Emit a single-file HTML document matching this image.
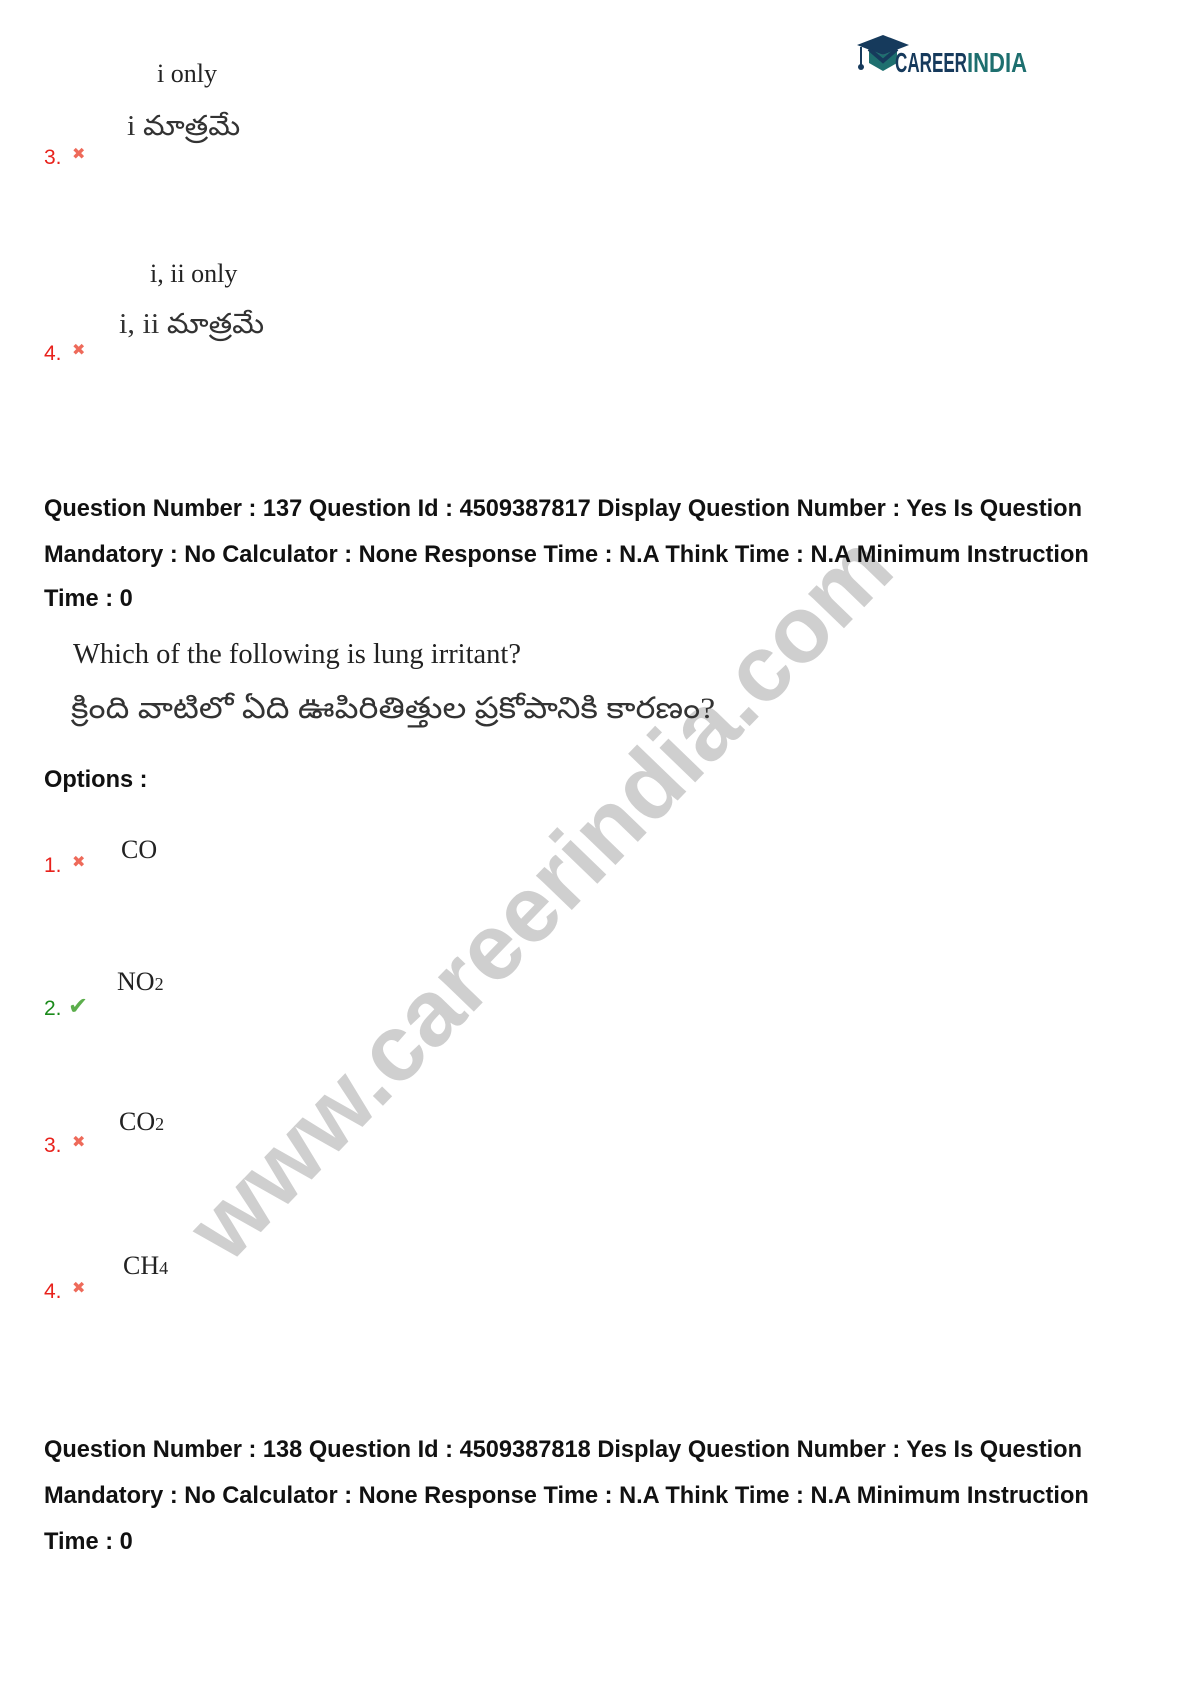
<!DOCTYPE html>
<html><head><meta charset="utf-8"><style>
body{margin:0;width:1191px;height:1684px;background:#fff;position:relative;overflow:hidden}
.a{position:absolute;white-space:nowrap;line-height:1}
.s{font-family:"Liberation Serif",serif;color:#222;font-size:26px}
.t{font-family:"Liberation Serif","Noto Sans CJK SC",serif;color:#333;font-size:28px;transform:scaleX(1.08);transform-origin:0 0}
.q{font-family:"Liberation Sans",sans-serif;font-weight:bold;font-size:23.6px;color:#111;left:44px}
.n{font-family:"Liberation Sans",sans-serif;font-size:21px;left:44px}
.r{color:#e8211b}.g{color:#1a8a1a}
.x{position:absolute;color:#ee6a5a;font-size:16px;font-family:"DejaVu Sans",sans-serif;font-weight:bold;line-height:1}
.wm{position:absolute;left:40px;top:850px;width:1000px;text-align:center;font-family:"Liberation Sans",sans-serif;font-weight:bold;font-size:94px;color:#cfcfcf;transform:rotate(-46deg);transform-origin:50% 50%;line-height:1;white-space:nowrap}
</style></head><body>
<div class="wm">www.careerindia.com</div>

<div class="a s" style="left:157px;top:61px">i only</div>
<div class="a t" style="left:127px;top:113px">i మాత్రమే</div>
<div class="a n r" style="top:147px">3.</div><div class="x" style="left:72px;top:146px">✖</div>

<div class="a s" style="left:150px;top:261px">i, ii only</div>
<div class="a t" style="left:119px;top:311px">i, ii మాత్రమే</div>
<div class="a n r" style="top:343px">4.</div><div class="x" style="left:72px;top:342px">✖</div>

<div class="a q" style="top:498px">Question Number : 137 Question Id : 4509387817 Display Question Number : Yes Is Question</div>
<div class="a q" style="top:544px">Mandatory : No Calculator : None Response Time : N.A Think Time : N.A Minimum Instruction</div>
<div class="a q" style="top:588px">Time : 0</div>

<div class="a s" style="left:73px;top:641px;font-size:28.5px">Which of the following is lung irritant?</div>
<div class="a t" style="left:71px;top:694px;font-size:30px;transform:scaleX(1.12)">క్రింది వాటిలో ఏది ఊపిరితిత్తుల ప్రకోపానికి కారణం?</div>

<div class="a q" style="top:769px">Options :</div>

<div class="a s" style="left:121px;top:837px">CO</div>
<div class="a n r" style="top:855px">1.</div><div class="x" style="left:72px;top:854px">✖</div>

<div class="a s" style="left:117px;top:969px">NO<span style="font-size:18px">2</span></div>
<div class="a n g" style="top:998px">2.</div><div class="a" style="left:68px;top:994px;color:#5cae4c;font-size:24px;font-family:'DejaVu Sans',sans-serif">✔</div>

<div class="a s" style="left:119px;top:1109px">CO<span style="font-size:18px">2</span></div>
<div class="a n r" style="top:1135px">3.</div><div class="x" style="left:72px;top:1134px">✖</div>

<div class="a s" style="left:123px;top:1253px">CH<span style="font-size:18px">4</span></div>
<div class="a n r" style="top:1281px">4.</div><div class="x" style="left:72px;top:1280px">✖</div>

<div class="a q" style="top:1439px">Question Number : 138 Question Id : 4509387818 Display Question Number : Yes Is Question</div>
<div class="a q" style="top:1485px">Mandatory : No Calculator : None Response Time : N.A Think Time : N.A Minimum Instruction</div>
<div class="a q" style="top:1531px">Time : 0</div>

<svg style="position:absolute;left:855px;top:33px" width="180" height="48" viewBox="0 0 180 48">
<polygon points="2,12 28,2 54,12 28,22" fill="#163a5c"/>
<polygon points="14,16 28,22 42,16 42,30 28,38 14,30" fill="#1e6f6f"/>
<path d="M14,16 L28,28 L42,16" fill="none" stroke="#163a5c" stroke-width="4"/>
<line x1="6" y1="14" x2="6" y2="32" stroke="#163a5c" stroke-width="2"/>
<circle cx="6" cy="34" r="3" fill="#163a5c"/>
<text x="40" y="39" font-family="Liberation Sans Narrow, Liberation Sans, sans-serif" font-weight="bold" font-size="28" fill="#163a5c" textLength="72" lengthAdjust="spacingAndGlyphs">CAREER</text>
<text x="112" y="39" font-family="Liberation Sans Narrow, Liberation Sans, sans-serif" font-weight="bold" font-size="28" fill="#1e6f6f" textLength="60" lengthAdjust="spacingAndGlyphs">INDIA</text>
</svg>
</body></html>
